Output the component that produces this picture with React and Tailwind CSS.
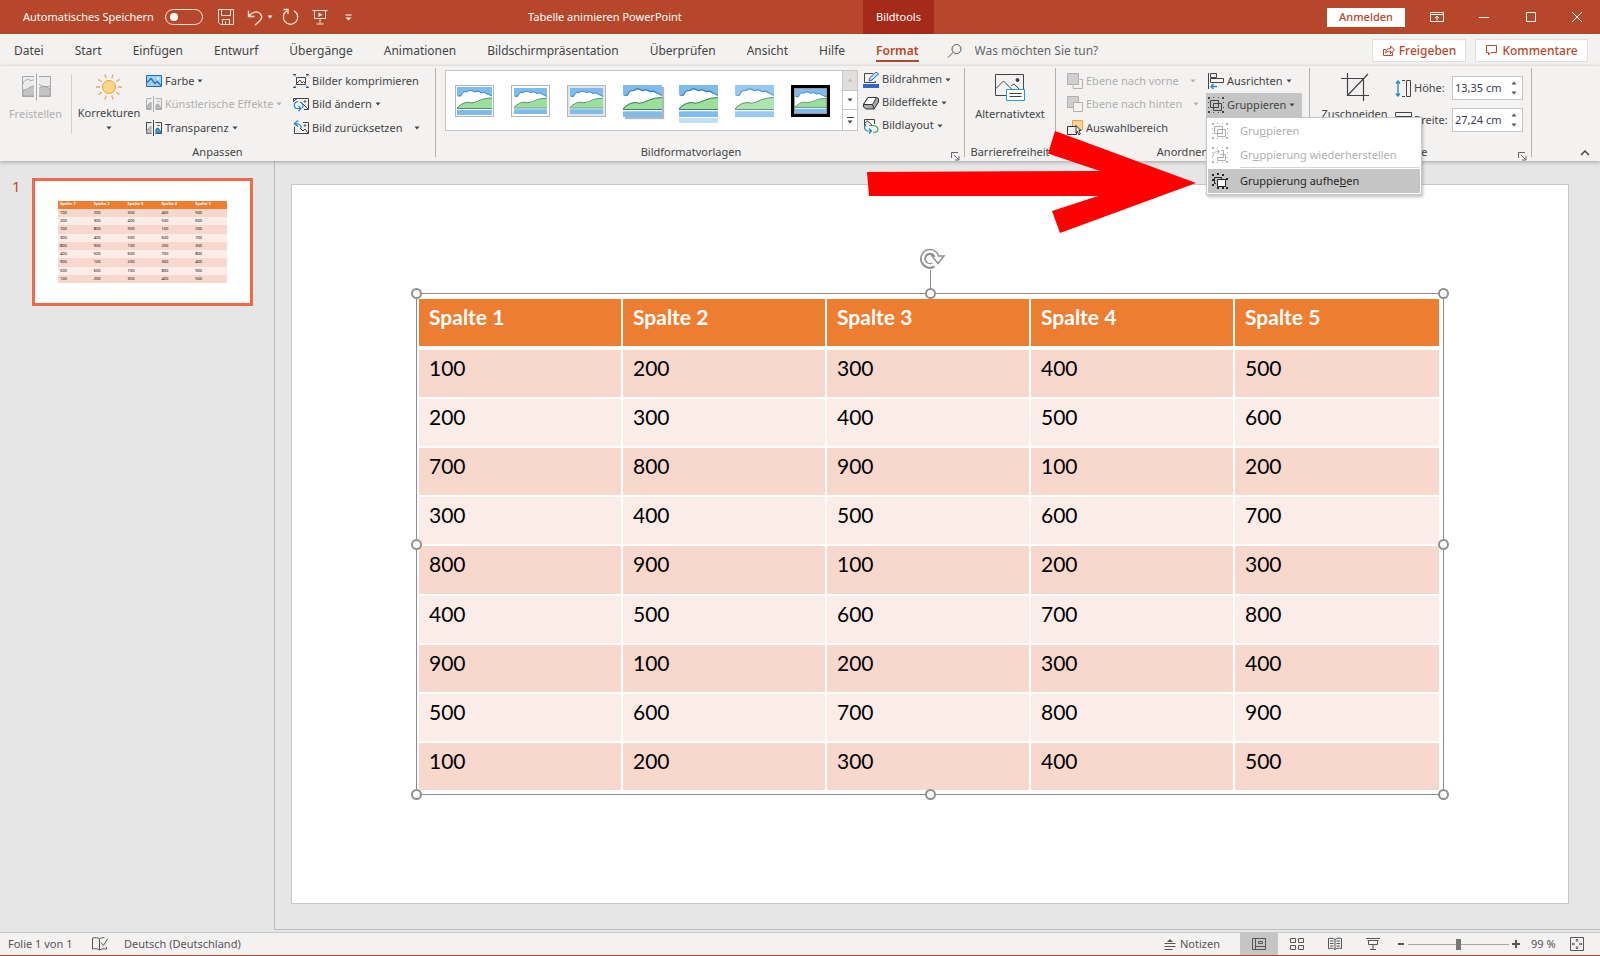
import React, { useState } from "react";

const columns = ["Spalte 1", "Spalte 2", "Spalte 3", "Spalte 4", "Spalte 5"];

const rows = [
  [100, 200, 300, 400, 500],
  [200, 300, 400, 500, 600],
  [700, 800, 900, 100, 200],
  [300, 400, 500, 600, 700],
  [800, 900, 100, 200, 300],
  [400, 500, 600, 700, 800],
  [900, 100, 200, 300, 400],
  [500, 600, 700, 800, 900],
  [100, 200, 300, 400, 500],
];

const tabs = [
  "Datei",
  "Start",
  "Einfügen",
  "Entwurf",
  "Übergänge",
  "Animationen",
  "Bildschirmpräsentation",
  "Überprüfen",
  "Ansicht",
  "Hilfe",
  "Format",
];

function Icon({ size = 16, className = "", children }) {
  return (
    <svg
      width={size}
      height={size}
      viewBox={`0 0 ${size} ${size}`}
      fill="none"
      stroke="currentColor"
      className={`shrink-0 ${className}`}
      aria-hidden="true"
    >
      {children}
    </svg>
  );
}

function Caret({ className = "" }) {
  return (
    <svg width="6" height="4" viewBox="0 0 6 4" className={`shrink-0 ${className}`} aria-hidden="true">
      <path d="M0.5 0.5h5L3 3.5z" fill="currentColor" />
    </svg>
  );
}

/* ---------- title bar ---------- */

function TitleBar() {
  const [autosave, setAutosave] = useState(false);

  return (
    <header className="flex h-[34px] shrink-0 items-center bg-[#b7472a] text-[11px] text-white">
      <div className="flex w-[528px] items-center pl-[23px]">
        <label htmlFor="autosave" className="w-[142px]">Automatisches Speichern</label>
        <input
          id="autosave"
          type="checkbox"
          checked={autosave}
          onChange={(e) => setAutosave(e.target.checked)}
          className="relative h-4 w-[38px] appearance-none rounded-full border border-[#fbe3da] before:absolute before:top-[3px] before:left-1 before:size-2 before:rounded-full before:bg-white"
        />
        <button aria-label="Speichern" className="ml-[14px]">
          <Icon size={18}>
            <path d="M1.5 1.5h15v15h-13l-2-2zM4.500 1.500v6h9v-6M5.500 16.500v-5h7v5M8.500 13.500v3" stroke="#fbe3da" />
          </Icon>
        </button>
        <button aria-label="Rückgängig" className="ml-3 flex items-center gap-[3px]">
          <Icon size={17}>
            <path d="M1.500 1.500v6h6M2 7C5 3 10 1.500 13 4.500c3 3 1.500 6-1 8L8 16" stroke="#fbe3da" strokeWidth="1.4" />
          </Icon>
          <Caret />
        </button>
        <button aria-label="Wiederholen" className="ml-[9px]">
          <Icon size={18}>
            <path d="M12 2.800A7.200 7.200 0 1 1 5 2.800M1.500 1.500h4.500v4.500" stroke="#fbe3da" strokeWidth="1.3" />
          </Icon>
        </button>
        <button aria-label="Von Beginn an" className="ml-3">
          <Icon size={16}>
            <path d="M0.500 1.500h15M2.500 1.500v8h11v-8M8 9.500v5M4.500 15h7" stroke="#fbe3da" />
            <path d="M6.500 3.500l4 2.200-4 2.200z" fill="#fbe3da" stroke="none" />
          </Icon>
        </button>
        <button aria-label="Symbolleiste anpassen" className="ml-4">
          <Icon size={9}>
            <path d="M1.500 2h6" stroke="#fff" />
            <path d="M1.500 4.500h6l-3 3z" fill="#fff" stroke="none" />
          </Icon>
        </button>
      </div>
      <h1 className="w-[335px]">Tabelle animieren PowerPoint</h1>
      <div className="flex h-full w-[71px] items-center justify-center bg-[#a52a1a]">Bildtools</div>
      <div className="ml-auto flex items-center">
        <button className="h-[19px] w-[78px] bg-white font-medium text-[#b7472a]">Anmelden</button>
        <div className="flex w-[195px] items-center justify-between pr-[17px] pl-[25px]">
          <button aria-label="Menüband-Anzeigeoptionen">
            <Icon size={14}>
              <path d="M0.500 2.500h13v9h-13zM0.500 4.500h13M7 10.500v-4M5 8.200l2-2 2 2" />
            </Icon>
          </button>
          <button aria-label="Minimieren">
            <Icon size={12}>
              <path d="M1 6.500h10" />
            </Icon>
          </button>
          <button aria-label="Maximieren">
            <Icon size={12}>
              <path d="M1.500 1.500h9v9h-9z" />
            </Icon>
          </button>
          <button aria-label="Schließen">
            <Icon size={12}>
              <path d="M1 1l10 10M11 1L1 11" />
            </Icon>
          </button>
        </div>
      </div>
    </header>
  );
}

function TabBar() {
  return (
    <div className="flex h-8 shrink-0 items-center bg-[#f3f2f1] pt-px text-[12px] text-[#444]">
      <nav className="flex items-center gap-[31px] pl-[14px]">
        {tabs.map((tab) => (
          <a
            key={tab}
            href="#"
            className={tab === "Format" ? "border-b-2 border-[#b7472a] pt-[2px] font-semibold text-[#b7472a]" : "border-b-2 border-transparent pt-[2px]"}
          >
            {tab}
          </a>
        ))}
      </nav>
      <label className="ml-7 flex items-center gap-3">
        <Icon size={16} className="text-[#555]">
          <circle cx="9.500" cy="6" r="4.500" />
          <path d="M6.200 9.300L1 14.500" />
        </Icon>
        <input
          type="text"
          aria-label="Suche"
          placeholder="Was möchten Sie tun?"
          className="w-[160px] bg-transparent outline-none placeholder:text-[#666] placeholder:opacity-100"
        />
      </label>
      <div className="mr-3 ml-auto flex gap-[9px] font-medium text-[#b7472a]">
        <button className="flex h-[23px] w-[94px] items-center justify-center gap-1 border border-[#e1dfdd] bg-white">
          <Icon size={13}>
            <path d="M4 5.500H1.500v6h9v-3M3.500 9c0-3 2-4.500 5-4.500V2l4 3.800-4 3.700V7c-2 0-3.500.5-5 2z" />
          </Icon>
          Freigeben
        </button>
        <button className="flex h-[23px] w-[113px] items-center justify-center gap-1 border border-[#e1dfdd] bg-white">
          <Icon size={13}>
            <path d="M1.500 1.500h10v7H6l-2.500 2.500V8.500h-2z" />
          </Icon>
          Kommentare
        </button>
      </div>
    </div>
  );
}

/* ---------- ribbon icons ---------- */

function CropSplitIcon() {
  return (
    <Icon size={30} className="text-[#a6a6a6]">
      <path d="M1.500 4.500h28v20h-28z" fill="#ececec" />
      <path d="M2 18c5 0 6-4 12-4v10H2zM17 17c4-3 7-4 12 0v7H17z" fill="#c4c4c4" />
      <path d="M2 12c1-4 5-6 8-3 1-1 2-1 4-1M18 12c3 3 6 3 11 2" />
      <path d="M13 1h5v28h-5z" fill="#f3f2f1" stroke="none" />
      <path d="M15.500 1.500v27" />
    </Icon>
  );
}

function SunIcon() {
  return (
    <Icon size={28}>
      <circle cx="14" cy="14" r="6.500" fill="#fbd58a" stroke="#e8a33d" />
      <path
        d="M23 14h4M5 14H1M21.300 19.300l3.200 2.300M6.700 19.300l-3.200 2.300M21.300 8.700l3.200-2.300M6.700 8.700L3.500 6.400M16.800 22.600l1.300 3.900M11.200 22.600l-1.300 3.900M16.800 5.400l1.300-3.900M11.200 5.400L9.900 1.500"
        stroke="#eba96a"
        strokeWidth="1.400"
      />
    </Icon>
  );
}

function PictureIcon() {
  return (
    <Icon>
      <path d="M0.500 2.500h15v11h-15z" fill="#9fd0f3" stroke="#1f6fb5" />
      <path d="M1 9.500l4-4 4 5 2-2 4 4" stroke="#1f6fb5" strokeWidth="1.300" />
      <circle cx="12" cy="5.500" r="1" fill="#fff" stroke="none" />
    </Icon>
  );
}

function SplitPictureIcon({ accent }) {
  return (
    <Icon>
      <path d="M5.500 2.500h-5v11h5M9.500 2.500h6v11h-6" fill="#ececec" />
      <path d="M1 13v-3l4-4v7z" fill="#bdbdbd" stroke="#a6a6a6" />
      <path d="M10 13V9l2-1 3 4v1z" fill={accent ? "#4c9be0" : "#bdbdbd"} stroke={accent ? "#1f6fb5" : "#a6a6a6"} />
      <path d="M7.500 0v16" />
      <path d="M11.500 5.500h2" />
    </Icon>
  );
}

function CompressIcon() {
  return (
    <Icon className="text-[#444]">
      <path d="M3.500 4.500h9v7h-9zM4 10l3-3 2 3 1.500-1.500L12 10" />
      <path d="M0 1l3 2.500M16 1l-3 2.500M0 15l3-2.500M16 15l-3-2.500" stroke="#2b88d8" />
      <path d="M1 2.500v-1h2M13 1.500h2v1M1 13.500v1h2M13 14.500h2v-1" />
    </Icon>
  );
}

function ChangePictureIcon() {
  return (
    <Icon className="text-[#444]">
      <path d="M0.500 6V2.500h15v11H11M1 5l3-2.500M8 6l7 7" />
      <circle cx="12" cy="5.500" r="0.800" />
      <path d="M5 5.500C1 6 0 10 3 12.500h4M5.500 10l2.500 2.500L5.500 15M9 12c2-2 1-5-2-6" stroke="#2487c7" strokeWidth="1.200" />
    </Icon>
  );
}

function ResetPictureIcon() {
  return (
    <Icon className="text-[#444]">
      <path d="M1.500 7v6.500h14v-11H10M7 8l3 3 2-2 3 4" />
      <circle cx="12" cy="5.500" r="0.800" />
      <path d="M5 0.500L1.500 3.500 5 6.500M2 3.500c4 0 6 1 6.500 5" stroke="#2487c7" strokeWidth="1.200" />
    </Icon>
  );
}

function BorderIcon() {
  return (
    <Icon>
      <path d="M12.500 9v1.500h-11v-9H10" stroke="#444" />
      <path d="M6 9l1-3.500L13 0l2.500 2L9 8z" fill="#bfe0f7" stroke="#1f6fb5" />
      <path d="M0 12h16v4H0z" fill="#3366cc" stroke="none" />
    </Icon>
  );
}

function EffectsIcon() {
  return (
    <Icon className="text-[#333]">
      <path d="M5 2.500h8.500l2 1v3.500l-4.500 7H3l-2.500-2V9.500z" fill="#a8a8a8" />
      <path d="M5 2.500h8.500L9.500 9.500h-9z" fill="#fff" />
      <path d="M9.500 9.500L11 14" />
    </Icon>
  );
}

function LayoutIcon() {
  return (
    <Icon>
      <path d="M1.500 9V1.500h10V6M2 5l2.500-2L9 7" stroke="#444" />
      <path d="M3 6c-2 2-2 6 1 7h4M6 10.500L8.500 13 6 15.500" stroke="#2487c7" strokeWidth="1.200" />
      <path d="M6 7.500h4c3 0 5 2 5 4s-2 3-5 3" stroke="#3aa66b" strokeWidth="1.200" />
    </Icon>
  );
}

function AltTextIcon() {
  return (
    <Icon size={30} className="text-[#444]">
      <path d="M11 22.500H0.500v-21h28V16M1 15.500L8.500 8l8 8M16 13l3-2 5 5" />
      <circle cx="22.500" cy="7" r="1.500" fill="#333" />
      <path d="M11.500 16.500h18v11h-18z" fill="#fff" stroke="#2a9cc0" />
      <path d="M14.500 20.500h12M14.500 23.500h12" />
    </Icon>
  );
}

function BringForwardIcon() {
  return (
    <Icon className="text-[#b0b0b0]">
      <path d="M6 12.500v3h9.500v-9h-3" fill="#f3f2f1" />
      <path d="M0.500 0.500h11v11h-11z" fill="#cfcfcf" />
    </Icon>
  );
}

function SendBackwardIcon() {
  return (
    <Icon className="text-[#b0b0b0]">
      <path d="M0.500 0.500h11v11h-11z" fill="#cfcfcf" />
      <path d="M6.500 6.500h9v9h-9z" fill="#f3f2f1" />
    </Icon>
  );
}

function SelectionPaneIcon() {
  return (
    <Icon className="text-[#333]">
      <path d="M5.500 0.500h10v9h-10z" fill="#fbd28f" stroke="#e8a33d" />
      <path d="M0.500 6.500h9v8h-9z" fill="#f3f2f1" />
      <path d="M9 5.500l5 5h-2.200l1.500 3.500-1.500.8-1.500-3.500L9 13z" fill="#fff" />
    </Icon>
  );
}

function AlignIcon() {
  return (
    <Icon className="text-[#444]">
      <path d="M0.500 0v16M2.500 0.500h6v4h-6zM2.500 5.500h13v4h-13z" />
      <path d="M9 13.500H3M5.500 11L3 13.500 5.500 16" stroke="#2487c7" strokeWidth="1.300" />
    </Icon>
  );
}

function GroupDots() {
  return (
    <path
      d="M0 0h2v2H0zM14 0h2v2h-2zM0 14h2v2H0zM14 14h2v2h-2zM5 0h1v1H5zM10 0h1v1h-1zM5 15h1v1H5zM10 15h1v1h-1zM0 5h1v1H0zM0 10h1v1H0zM15 5h1v1h-1zM15 10h1v1h-1z"
      fill="currentColor"
      stroke="none"
    />
  );
}

function GroupIcon() {
  return (
    <Icon>
      <GroupDots />
      <path d="M2.500 3.500h8v7h-8zM5.500 6.500h8v7h-8z" />
    </Icon>
  );
}

function RegroupIcon() {
  return (
    <Icon>
      <GroupDots />
      <path d="M1 9.500c0-4 2-5 6-5M5 2l2.500 2.500L5 7M9 3.500h2.500v7h-6M8.500 7.500h5v6h-8v-3" />
    </Icon>
  );
}

function UngroupIcon() {
  return (
    <Icon>
      <path
        d="M0 1h2v2H0zM5 0h2v2H5zM10 1h2v2h-2zM0 6h2v2H0zM0 11h2v2H0zM5 14h2v2H5zM14 5h2v2h-2zM14 14h2v2h-2zM10 14h2v2h-2z"
        fill="currentColor"
        stroke="none"
      />
      <path d="M4 10.500H2.500v-6h7V6" />
      <path d="M5.500 6.500h8v7h-8z" fill="#fff" />
    </Icon>
  );
}

function CropIcon() {
  return (
    <Icon size={28} className="text-[#444]">
      <path d="M6.500 0v22.500H28M0 5.500h22.500V28M6.500 22.500L27 1" strokeWidth="1.200" />
    </Icon>
  );
}

function HeightIcon() {
  return (
    <Icon size={17} className="text-[#444]">
      <path d="M3 1v15M1 3.500L3 1l2 2.500M1 13.500L3 16l2-2.500" stroke="#2487c7" strokeWidth="1.300" />
      <path d="M7 0.500h3M7 16.500h3M11.500 0.500h4v16h-4z" />
    </Icon>
  );
}

function WidthIcon() {
  return (
    <Icon size={17} className="text-[#444]">
      <path d="M0.500 4V0.500h16v4h-16" />
      <path d="M1 13h15M3.500 11L1 13l2.500 2M13.500 11l2.500 2-2.500 2" stroke="#2487c7" />
    </Icon>
  );
}

/* ---------- ribbon ---------- */

function Separator() {
  return <div className="h-[89px] w-px shrink-0 bg-[#b3b0ad]" />;
}

function Launcher() {
  return (
    <button aria-label="Weitere Optionen" className="absolute right-1 bottom-0 text-[#666]">
      <Icon size={9}>
        <path d="M0.500 6V0.500H7M3 3l4.500 4.500M8 4v4H4" />
      </Icon>
    </button>
  );
}

function Group({ label, className = "", launcher, children }) {
  return (
    <section className={`relative flex h-[93px] shrink-0 flex-col ${className}`}>
      <div className="flex h-[77px]">{children}</div>
      <h2 className={`text-center text-[11px] leading-[18px] ${launcher ? "pr-[18px]" : ""}`}>{label}</h2>
      {launcher && <Launcher />}
    </section>
  );
}

function RibbonButton({ icon, label, disabled, caret, className = "" }) {
  return (
    <button
      disabled={disabled}
      className={`flex items-center gap-[3px] whitespace-nowrap ${disabled ? "text-[#b1afad]" : ""} ${className}`}
    >
      {icon}
      {label}
      {caret && <Caret />}
    </button>
  );
}

function StylePreview({ variant }) {
  const frames = {
    plain: "border border-[#b5b5b5] p-px",
    matte: "border border-[#b5b5b5] p-[2px]",
    metal: "border border-[#b5b5b5] bg-[#e4e4e4] p-[2px]",
    shadow: "shadow-[2px_2px_1px_#b5b5b5]",
    reflect: "overflow-visible rounded-t-sm",
    soft: "opacity-80",
    double: "border-[3px] border-black bg-[#999] p-px",
  };

  return (
    <button aria-label={`Bildformatvorlage ${variant}`} className="flex h-10 w-[56px] shrink-0 items-center justify-center">
      <span className={`relative block h-8 w-[39px] ${frames[variant]}`}>
        <svg viewBox="0 0 36 28" preserveAspectRatio="none" className="h-full w-full" aria-hidden="true">
          <path d="M0 0h36v28H0z" fill="#fff" />
          <path d="M0 0h36v9c-2 0-3-2-5-2-2-2-4-2-6-1-2-2-5-2-7-1-3-2-6-2-8 0-4-1-5 2-6 4H0z" fill="#7fbcee" />
          <path d="M36 9c-2 0-3-2-5-2-2-2-4-2-6-1-2-2-5-2-7-1-3-2-6-2-8 0-4-1-5 2-6 4H1" fill="none" stroke="#2f78b7" />
          <path d="M0 21c5-4 9-7 15-5 6 1 9-5 21-5v10z" fill="#9adf9c" />
          <path d="M0 21c4-4 9-7 15-5 8-1 9-5 21-5M0 21.500h36" fill="none" stroke="#3f7d5c" strokeWidth="0.900" />
          <path d="M0 23h36v5H0z" fill="#7fbcee" />
        </svg>
        {variant === "reflect" && <span className="absolute top-full left-0 mt-px h-[5px] w-full bg-[#bfe0f7]" />}
      </span>
    </button>
  );
}

function GroupMenu() {
  return (
    <div
      role="menu"
      className="absolute top-full left-0 z-20 w-[216px] border border-[#c6c6c6] bg-white p-px text-[11px] shadow-[1px_2px_3px_rgba(0,0,0,0.25)]"
    >
      <button role="menuitem" disabled className="flex h-6 w-full items-center gap-3 pl-1 text-[#b1afad]">
        <GroupIcon />
        <span>Gru<u>p</u>pieren</span>
      </button>
      <button role="menuitem" disabled className="flex h-6 w-full items-center gap-3 pl-1 text-[#b1afad]">
        <RegroupIcon />
        <span>Gr<u>u</u>ppierung wiederherstellen</span>
      </button>
      <div className="mb-px ml-8 h-px bg-[#d8d8d8]" />
      <button role="menuitem" className="flex h-6 w-full items-center gap-3 bg-[#c5c5c5] pl-1 text-[#262626]">
        <UngroupIcon />
        <span>Gruppierung aufhe<u>b</u>en</span>
      </button>
    </div>
  );
}

function PointerArrow() {
  return (
    <svg
      width="330"
      height="104"
      viewBox="0 0 330 104"
      className="pointer-events-none absolute top-[37px] right-full z-10 mr-[10px] max-w-none"
      aria-hidden="true"
    >
      <path d="M1 42L234 41 182 23.500 189 1 330 53 194 103 186 81 232 66H3z" fill="#fe0000" />
    </svg>
  );
}

function SizeField({ id, icon, label, value }) {
  return (
    <div className="flex h-8 items-center">
      {icon}
      <label htmlFor={id} className="w-10 pl-[2px]">{label}</label>
      <div className="flex h-6 w-[71px] items-center border border-[#c8c6c4] bg-white">
        <input id={id} type="text" defaultValue={value} className="w-[58px] pl-[2px] text-[#3b3b5a] outline-none" />
        <div className="flex flex-col gap-[6px] text-[#555]">
          <button aria-label={`${label} erhöhen`} className="rotate-180"><Caret className="block" /></button>
          <button aria-label={`${label} verringern`}><Caret className="block" /></button>
        </div>
      </div>
    </div>
  );
}

function Ribbon() {
  return (
    <div className="relative z-10 flex h-[95px] shrink-0 bg-[#f3f2f1] pt-[2px] text-[11px] text-[#444] shadow-[0_1px_4px_rgba(0,0,0,0.3)]">
      <Group label="Anpassen" className="w-[435px]">
        <button disabled className="flex w-[71px] flex-col items-center gap-1 pt-1 text-[#b1afad]">
          <CropSplitIcon />
          Freistellen
        </button>
        <div className="mt-[6px] h-[60px] w-px bg-[#d2d0ce]" />
        <button className="flex w-[74px] flex-col items-center gap-1 pt-[5px]">
          <SunIcon />
          Korrekturen
          <Caret />
        </button>
        <div className="grid w-[147px] grid-rows-3 pt-px pb-[3px]">
          <RibbonButton icon={<PictureIcon />} label="Farbe" caret />
          <RibbonButton icon={<SplitPictureIcon />} label="Künstlerische Effekte" caret disabled />
          <RibbonButton icon={<SplitPictureIcon accent />} label="Transparenz" caret />
        </div>
        <div className="grid grid-rows-3 pt-px pb-[3px]">
          <RibbonButton icon={<CompressIcon />} label="Bilder komprimieren" />
          <RibbonButton icon={<ChangePictureIcon />} label="Bild ändern" caret />
          <RibbonButton icon={<ResetPictureIcon />} label={<span className="mr-2">Bild zurücksetzen</span>} caret />
        </div>
      </Group>
      <Separator />

      <Group label="Bildformatvorlagen" className="w-[528px]" launcher>
        <div className="mt-[2px] ml-[9px] flex h-[61px] w-[413px] shrink-0 border border-[#c8c6c4] bg-white">
          <div className="flex w-[396px] items-center">
            <StylePreview variant="plain" />
            <StylePreview variant="matte" />
            <StylePreview variant="metal" />
            <StylePreview variant="shadow" />
            <StylePreview variant="reflect" />
            <StylePreview variant="soft" />
            <StylePreview variant="double" />
          </div>
          <div className="grid flex-1 grid-rows-3 divide-y divide-[#c8c6c4] border-l border-[#c8c6c4]">
            <button aria-label="Nach oben" className="flex items-center justify-center bg-[#e1dfdd] text-[#bbb]">
              <Caret className="rotate-180" />
            </button>
            <button aria-label="Nach unten" className="flex items-center justify-center">
              <Caret />
            </button>
            <button aria-label="Mehr" className="flex flex-col items-center justify-center gap-[2px]">
              <span className="h-px w-[7px] bg-[#444]" />
              <Caret />
            </button>
          </div>
        </div>
        <div className="ml-[5px] grid grid-rows-3 pb-[6px]">
          <RibbonButton icon={<BorderIcon />} label="Bildrahmen" caret />
          <RibbonButton icon={<EffectsIcon />} label="Bildeffekte" caret />
          <RibbonButton icon={<LayoutIcon />} label="Bildlayout" caret />
        </div>
      </Group>
      <Separator />

      <Group label="Barrierefreiheit" className="w-[90px]">
        <button className="flex w-full flex-col items-center gap-[3px] pt-[5px]">
          <AltTextIcon />
          Alternativtext
        </button>
      </Group>
      <Separator />

      <Group label="Anordnen" className="w-[253px]">
        <div className="ml-[11px] grid w-[139px] grid-rows-3 pt-px pb-[3px]">
          <RibbonButton icon={<BringForwardIcon />} label={<span className="mr-2">Ebene nach vorne</span>} caret disabled />
          <RibbonButton icon={<SendBackwardIcon />} label={<span className="mr-2">Ebene nach hinten</span>} caret disabled />
          <RibbonButton icon={<SelectionPaneIcon />} label="Auswahlbereich" />
        </div>
        <div className="pt-px">
          <RibbonButton icon={<AlignIcon />} label="Ausrichten" caret className="h-6 pl-[2px]" />
          <div className="relative">
            <RibbonButton icon={<GroupIcon />} label="Gruppieren" caret className="h-6 w-[96px] bg-[#c5c5c5] pl-[2px]" />
            <GroupMenu />
            <PointerArrow />
          </div>
        </div>
      </Group>
      <Separator />

      <Group label="Größe" className="w-[221px]" launcher>
        <button className="flex w-[85px] flex-col items-center gap-[5px] pt-[5px] pl-1">
          <CropIcon />
          Zuschneiden
        </button>
        <div className="pt-1">
          <SizeField id="hoehe" icon={<HeightIcon />} label="Höhe:" value="13,35 cm" />
          <SizeField id="breite" icon={<WidthIcon />} label="Breite:" value="27,24 cm" />
        </div>
      </Group>
      <Separator />

      <button aria-label="Menüband reduzieren" className="mr-[10px] mb-[3px] ml-auto self-end">
        <Icon size={10} className="text-[#444]">
          <path d="M1 7l4-4 4 4" strokeWidth="1.500" />
        </Icon>
      </button>
    </div>
  );
}

/* ---------- slide ---------- */

function SlideTable({ small }) {
  const cell = small ? "pl-[2px]" : "border-r-2 border-r-white pt-1 pl-[10px] last:border-r-0";
  const line = small ? "" : "border-b-2 border-b-white";

  return (
    <table
      className={
        small
          ? "h-[82px] w-full table-fixed text-left text-[4px] leading-[4px]"
          : "h-full w-full table-fixed border-separate border-spacing-0 text-left font-[Lato,Carlito,sans-serif] text-[21px] leading-7"
      }
    >
      <thead>
        <tr className={small ? "h-2 bg-[#ed7d31] text-white" : "h-[51px] bg-[#ed7d31] text-white"}>
          {columns.map((c) => (
            <th key={c} className={`align-top font-bold ${cell} ${small ? "pt-px" : "border-b-4 border-b-white"}`}>{c}</th>
          ))}
        </tr>
      </thead>
      <tbody className="text-black">
        {rows.map((row, i) => (
          <tr key={i} className="odd:bg-[#f8d7cd] even:bg-[#fcece8]">
            {row.map((value, j) => (
              <td key={j} className={`align-top ${cell} ${small ? "pt-[2px]" : line}`}>{value}</td>
            ))}
          </tr>
        ))}
      </tbody>
    </table>
  );
}

function Handle({ className }) {
  return <span className={`absolute size-[11px] rounded-full border-2 border-[#919191] bg-white ${className}`} />;
}

function SelectedTable() {
  return (
    <div className="relative h-[70%] w-[1028px] max-w-[81%] border border-[#8c8c8c] p-1 pt-[5px] pb-[2px] pl-[2px]">
      <SlideTable />
      <span className="absolute -top-6 left-1/2 h-6 w-px bg-[#8c8c8c]" />
      <svg
        width="28"
        height="24"
        viewBox="0 0 28 24"
        fill="none"
        className="absolute -top-[47px] left-1/2 -ml-3"
        aria-hidden="true"
      >
        <path d="M19 12a7 7 0 1 0-3.500 6" stroke="#919191" strokeWidth="6" />
        <path d="M14 9h12l-6 7.500z" fill="#fff" stroke="#919191" strokeWidth="1.500" />
        <path d="M19 11.500a7 7 0 1 0-3.500 6" stroke="#fff" strokeWidth="2.500" />
      </svg>
      <Handle className="-top-[6px] -left-[6px]" />
      <Handle className="-top-[6px] left-1/2 -ml-[5px]" />
      <Handle className="-top-[6px] -right-[6px]" />
      <Handle className="top-1/2 -left-[6px] -mt-[5px]" />
      <Handle className="top-1/2 -right-[6px] -mt-[5px]" />
      <Handle className="-bottom-[6px] -left-[6px]" />
      <Handle className="-bottom-[6px] left-1/2 -ml-[5px]" />
      <Handle className="-right-[6px] -bottom-[6px]" />
    </div>
  );
}

function Workspace() {
  return (
    <div className="flex min-h-0 flex-1 bg-[#e6e6e6]">
      <aside className="flex w-[274px] shrink-0 items-start pt-[17px] pl-3">
        <span className="w-5 text-[15px] leading-4 text-[#d24726]">1</span>
        <button
          aria-label="Folie 1"
          className="flex h-[128px] w-[221px] items-center justify-center border-[3px] border-[#f1694a] bg-white px-[23px]"
        >
          <SlideTable small />
        </button>
      </aside>
      <main className="flex min-w-0 flex-1 border-b border-l border-[#bdbdbd] pt-[23px] pr-[31px] pb-[25px] pl-4">
        <div className="flex flex-1 items-center justify-center border border-[#c6c6c6] bg-white">
          <SelectedTable />
        </div>
      </main>
    </div>
  );
}

/* ---------- status bar ---------- */

function StatusBar() {
  const [zoom, setZoom] = useState(50);

  return (
    <footer className="mt-[2px] flex h-6 shrink-0 items-center border-t border-b border-t-[#c8c8c8] border-b-[#b7472a] bg-[#f3f2f1] text-[11px] text-[#555]">
      <span className="w-[92px] pl-2">Folie 1 von 1</span>
      <button aria-label="Rechtschreibprüfung">
        <Icon>
          <path d="M7.500 3C6 1.500 3 1.500 0.500 2v11c2.500-.5 5.500-.5 7 1V3c1-1 3-1.500 5-1.300M7.500 14c2-1.500 4-1 7-1v-2M9 6.500l2.500 3L15.500 3" />
        </Icon>
      </button>
      <button className="ml-4">Deutsch (Deutschland)</button>

      <div className="ml-auto flex h-full items-center">
        <button className="mr-5 flex items-center gap-1">
          <Icon size={12}>
            <path d="M0.500 5.500h11M0.500 8.500h11M0.500 11.500h8" />
            <path d="M3 4h6L6 1z" fill="currentColor" stroke="none" />
          </Icon>
          Notizen
        </button>
        <button aria-label="Normalansicht" className="flex h-full w-[38px] items-center justify-center bg-[#c5c5c5]">
          <Icon>
            <path d="M1.500 2.500h13v11h-13zM4.500 2.500v11M4.500 10.500h10M7.500 5.500h4v2h-4z" />
          </Icon>
        </button>
        <button aria-label="Foliensortierung" className="flex w-[38px] justify-center">
          <Icon>
            <path d="M1.500 2.500h5v4h-5zM9.500 2.500h5v4h-5zM1.500 9.500h5v4h-5zM9.500 9.500h5v4h-5z" />
          </Icon>
        </button>
        <button aria-label="Leseansicht" className="flex w-[38px] justify-center">
          <Icon>
            <path d="M8 3.500C6 2 4 2 1.500 2.500v10c2.500-.5 4.500-.5 6.500 1 2-1.500 4-1.500 6.500-1v-10C12 2 10 2 8 3.500zM8 3.500v10M3 5h3.500M3 7.500h3.500M3 10h3.500M9.500 5H13M9.500 7.500H13M9.500 10H13" />
          </Icon>
        </button>
        <button aria-label="Bildschirmpräsentation" className="flex w-[38px] justify-center">
          <Icon>
            <path d="M1 2.500h14M2.500 4.500h11M3.500 4.500v4h9v-4M8 9v4M5 13.500h6" />
          </Icon>
        </button>
        <button aria-label="Verkleinern" className="ml-[5px]">
          <Icon size={8}>
            <path d="M1 4h6" strokeWidth="2" />
          </Icon>
        </button>
        <input
          type="range"
          aria-label="Zoom"
          value={zoom}
          onChange={(e) => setZoom(e.target.value)}
          className="mx-[3px] h-3 w-[101px] appearance-none bg-[linear-gradient(#a6a6a6,#a6a6a6)] bg-[length:100%_1px] bg-center bg-no-repeat [&::-webkit-slider-thumb]:h-[11px] [&::-webkit-slider-thumb]:w-[5px] [&::-webkit-slider-thumb]:appearance-none [&::-webkit-slider-thumb]:bg-[#777]"
        />
        <button aria-label="Vergrößern">
          <Icon size={8}>
            <path d="M0 4h8M4 0v8" strokeWidth="2" />
          </Icon>
        </button>
        <span className="w-[50px] pl-[11px]">99 %</span>
        <button aria-label="An Fenster anpassen" className="mr-4">
          <Icon size={14}>
            <path d="M0.500 0.500h13v13h-13z" />
            <path d="M7 2v3M7 9v3M2 7h3M9 7h3M6 3.500L7 2l1 1.500M6 10.500L7 12l1-1.500M3.500 6L2 7l1.500 1M10.500 6L12 7l-1.500 1" />
          </Icon>
        </button>
      </div>
    </footer>
  );
}

function App() {
  return (
    <div className="flex h-screen min-h-[600px] flex-col overflow-hidden bg-[#e6e6e6] font-['Noto_Sans','Open_Sans',sans-serif]">
      <TitleBar />
      <TabBar />
      <Ribbon />
      <Workspace />
      <StatusBar />
    </div>
  );
}

export default App;
